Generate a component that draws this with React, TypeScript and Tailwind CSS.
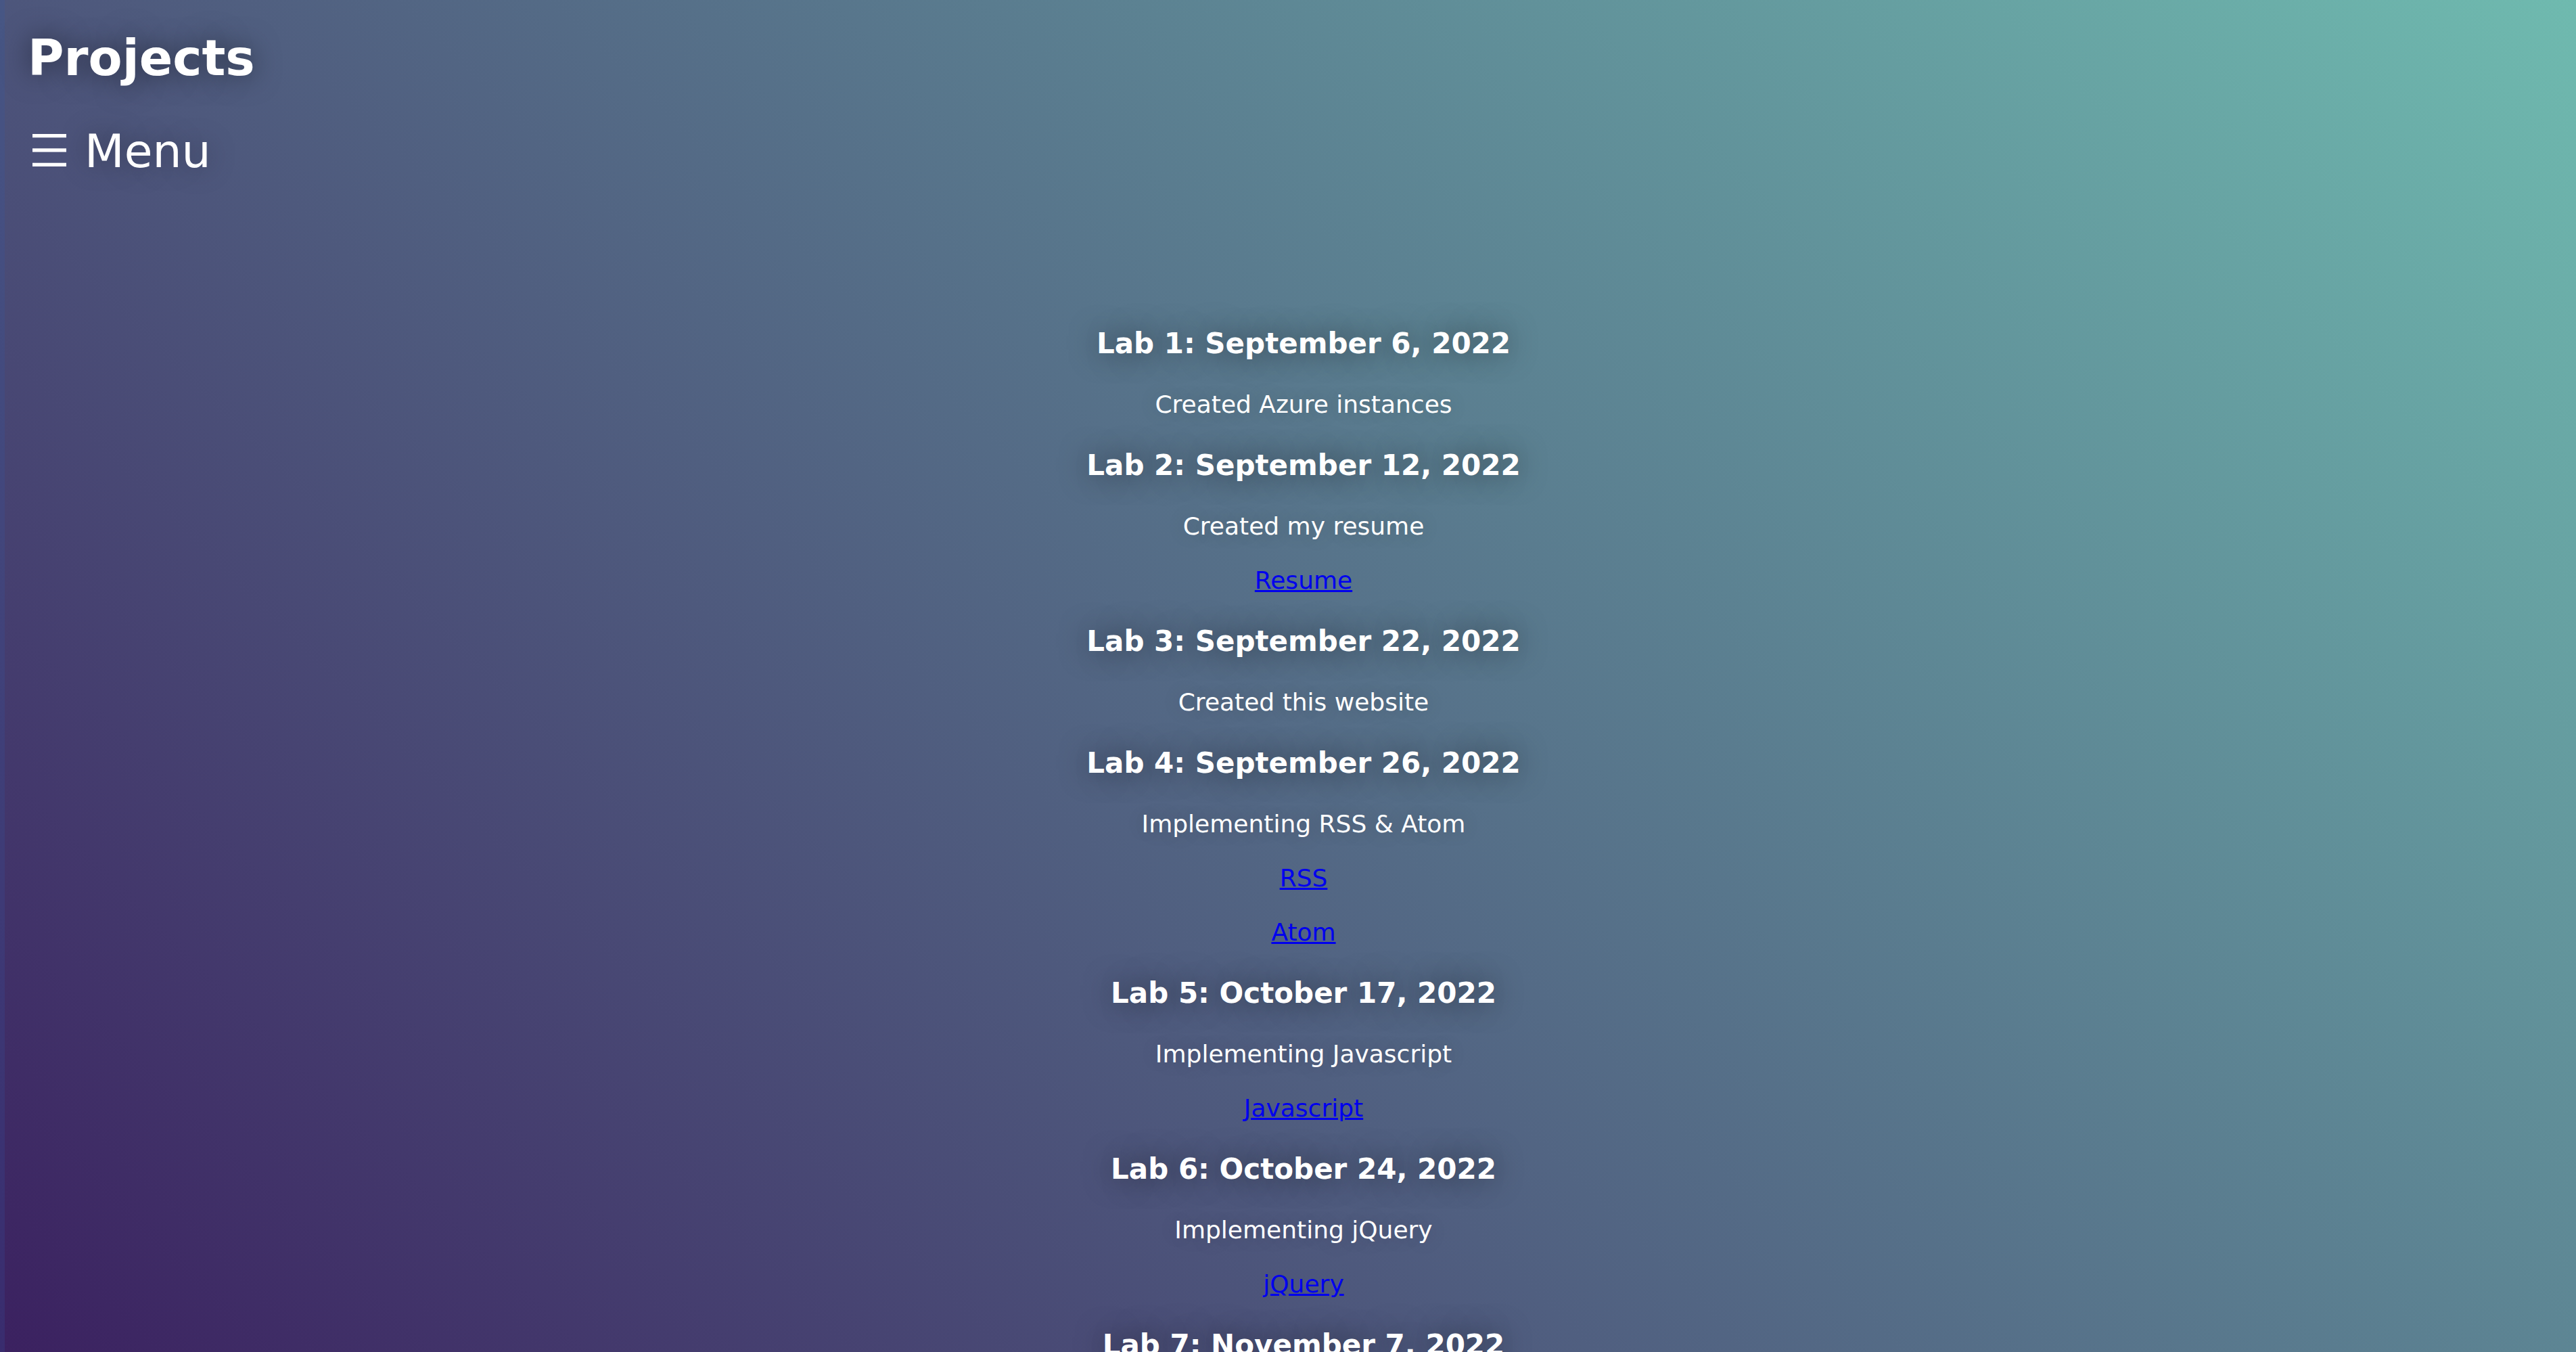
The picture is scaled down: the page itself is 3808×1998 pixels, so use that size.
import React from "react";

type Section = { title: string; texts: string[]; links: string[] };

const sections: Section[] = [
  { title: "Lab 1: September 6, 2022", texts: ["Created Azure instances"], links: [] },
  { title: "Lab 2: September 12, 2022", texts: ["Created my resume"], links: ["Resume"] },
  { title: "Lab 3: September 22, 2022", texts: ["Created this website"], links: [] },
  { title: "Lab 4: September 26, 2022", texts: ["Implementing RSS & Atom"], links: ["RSS", "Atom"] },
  { title: "Lab 5: October 17, 2022", texts: ["Implementing Javascript"], links: ["Javascript"] },
  { title: "Lab 6: October 24, 2022", texts: ["Implementing jQuery"], links: ["jQuery"] },
  { title: "Lab 7: November 7, 2022", texts: ["Implementing Node.js"], links: ["Node.js"] },
];

function Hamburger() {
  return (
    <svg width="50" height="48" viewBox="0 0 50 48" className="ml-[7px] mb-[4px] shrink-0" fill="#ffffff">
      <rect x="0" y="0" width="50" height="5.3" />
      <rect x="0" y="21.3" width="50" height="5.3" />
      <rect x="0" y="42.7" width="50" height="5.3" />
    </svg>
  );
}

export default function App() {
  return (
    <div className="flex h-screen w-full overflow-hidden bg-[linear-gradient(45deg,#3b2160,#6fbaaf)] font-['DejaVu_Sans',sans-serif] text-white">
      <div className="w-[7px] shrink-0 bg-[rgba(50,90,170,0.2)]" />
      <div className="flex min-w-0 flex-1 flex-col">
        <header className="pl-[34px]">
          <h1 className="mt-[43px] text-[73px] font-bold leading-[85px] [text-shadow:0_0_40px_rgba(0,0,0,0.5)]">
            Projects
          </h1>
          <div className="mt-[56px] flex h-[80px] items-center">
            <Hamburger />
            <span className="ml-[27px] text-[68px] leading-[80px] [text-shadow:0_0_40px_rgba(0,0,0,0.35)]">
              Menu
            </span>
          </div>
        </header>
        <main className="flex flex-col items-center pl-[39px] pt-[194px] text-center">
          {sections.map((s) => (
            <section key={s.title} className="flex flex-col items-center">
              <h2 className="text-[42px] font-bold leading-[100px] [text-shadow:0_0_40px_rgba(0,0,0,0.5)]">
                {s.title}
              </h2>
              {s.texts.map((t) => (
                <p key={t} className="text-[36px] leading-[80px] [text-shadow:0_0_30px_rgba(0,0,0,0.2)]">
                  {t}
                </p>
              ))}
              {s.links.map((l) => (
                <p key={l} className="text-[36px] leading-[80px]">
                  <a href="#" className="text-[#0000ee] underline">
                    {l}
                  </a>
                </p>
              ))}
            </section>
          ))}
        </main>
      </div>
    </div>
  );
}
